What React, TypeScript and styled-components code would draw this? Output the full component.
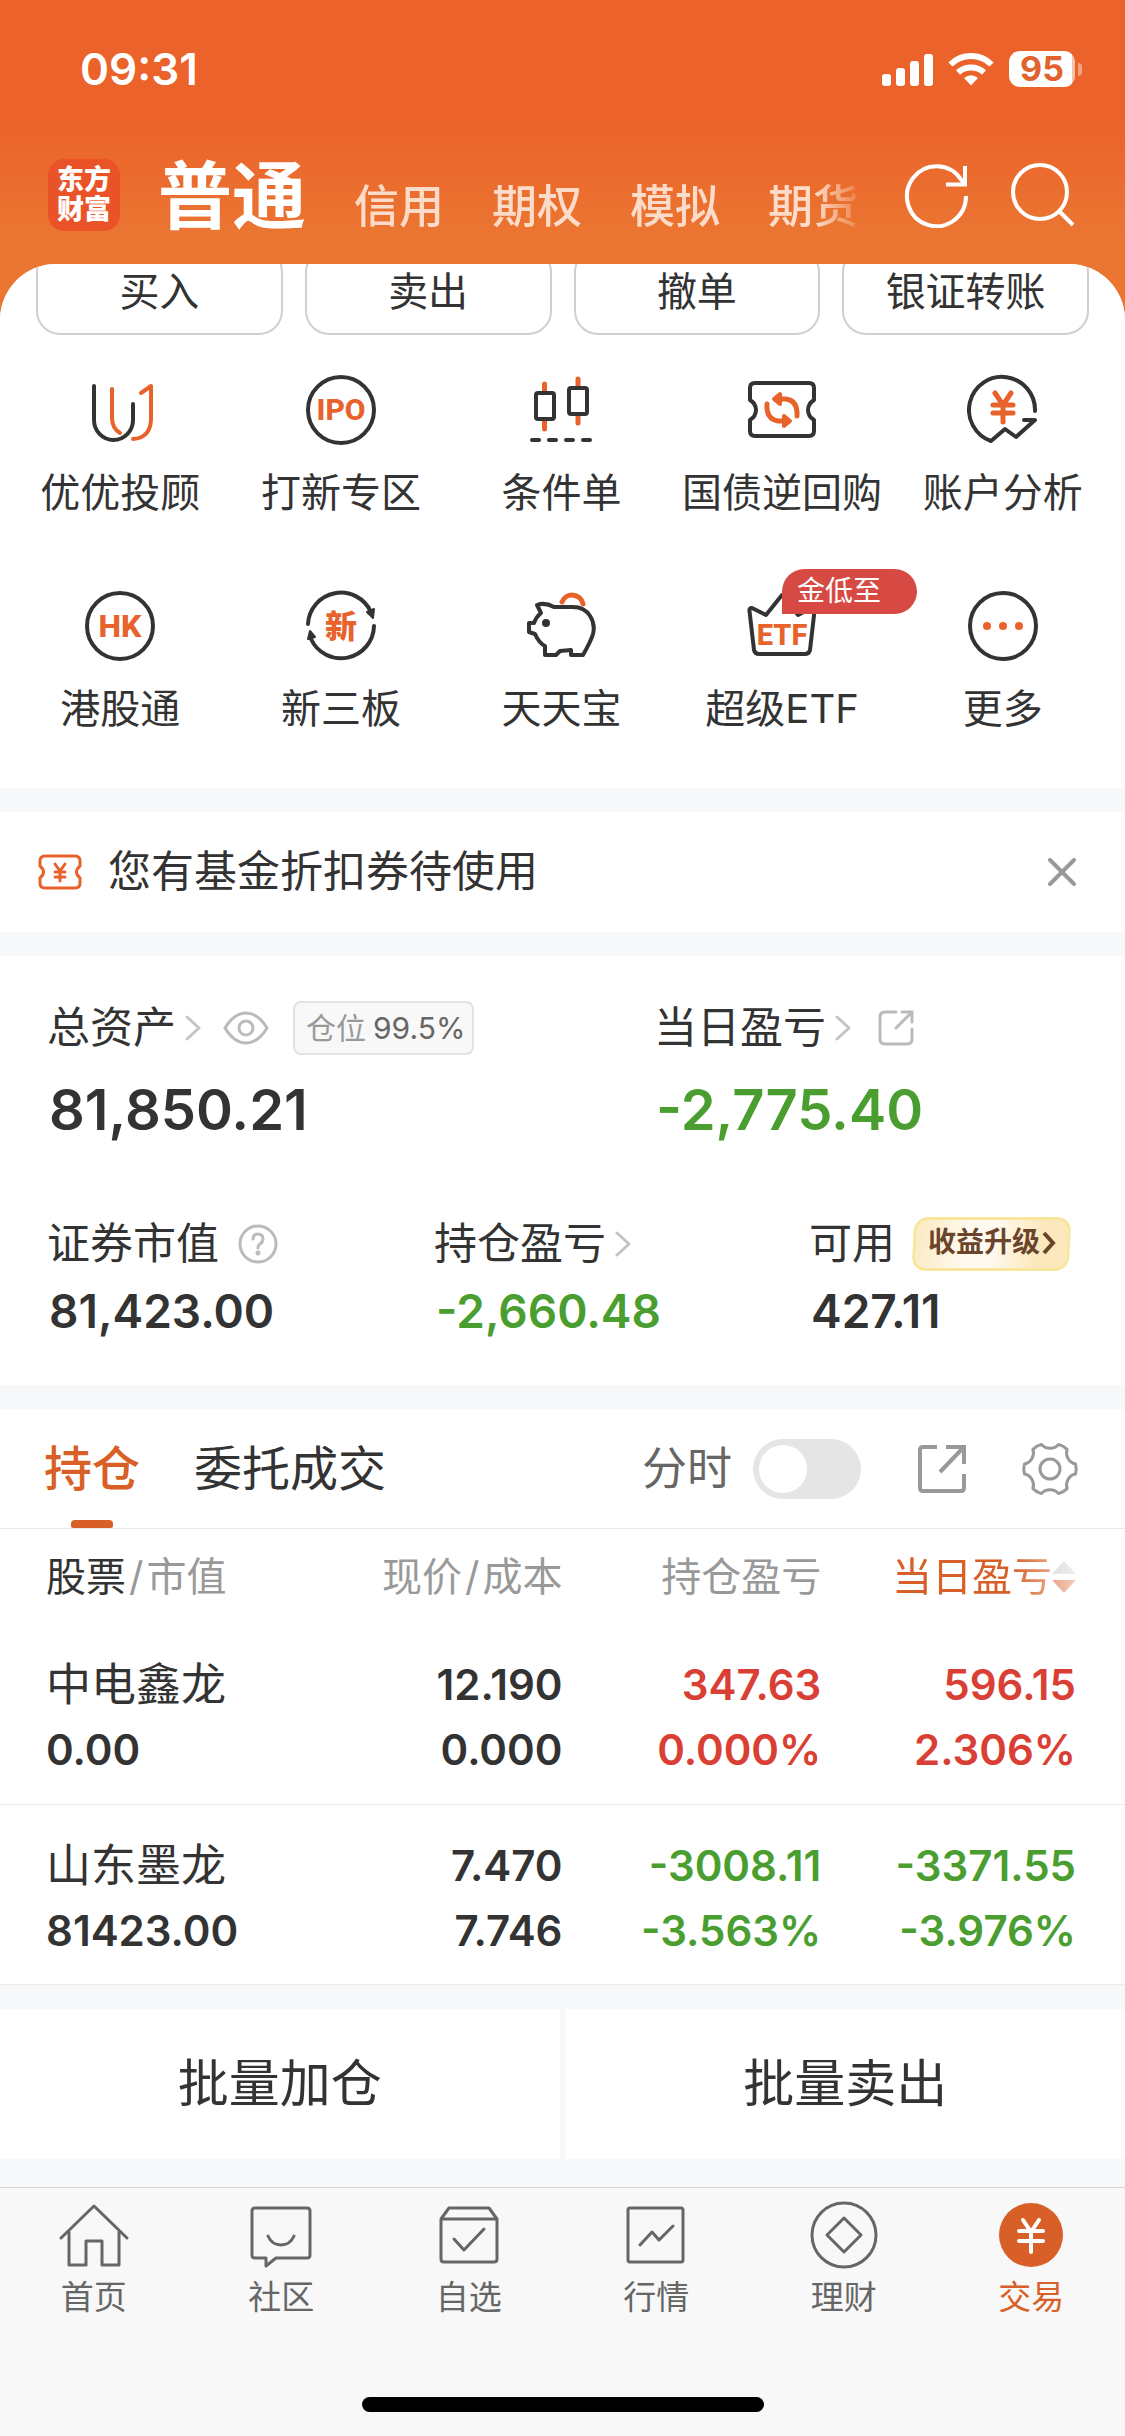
import React from "react";
import styled, { createGlobalStyle } from "styled-components";

const color = {
  ink: "#333333",
  mid: "#666666",
  soft: "#999999",
  faint: "#bbbbbb",
  accent: "#d95f28",
  icon: "#e8632c",
  up: "#d93f35",
  down: "#4a9e30",
  band: "#f7f8fa",
};

const Global = createGlobalStyle`
  *, *::before, *::after { box-sizing: border-box; }
  body {
    margin: 0;
    background: ${color.band};
    color: ${color.ink};
    font-family: Inter, "Noto Sans CJK SC", sans-serif;
    line-height: 1.2;
  }
  button {
    margin: 0;
    padding: 0;
    border: 0;
    background: none;
    color: inherit;
    font: inherit;
    cursor: pointer;
  }
  a { color: inherit; text-decoration: none; }
  svg { display: block; flex: none; }
  h1, h2, p, dl, dd, dt { margin: 0; font-weight: 400; }
`;

const Shell = styled.div`
  display: flex;
  flex-direction: column;
  min-height: 100vh;
  background: #eb7632;
`;

/* ---------- header ---------- */

const Header = styled.header`
  background: linear-gradient(#eb622a 0, #eb622a 116px, #eb7632 240px);
  color: #fff;
`;

const StatusBar = styled.div`
  display: flex;
  align-items: center;
  justify-content: space-between;
  height: 124px;
  padding: 14px 43px 0 80px;
`;

const Clock = styled.time`
  font-size: 44px;
  font-weight: 600;
  line-height: 56px;
`;

const StatusIcons = styled.div`
  display: flex;
  align-items: center;
  gap: 15px;
`;

const Battery = styled.div`
  display: flex;
  align-items: center;
  gap: 3px;
  &::after {
    content: "";
    width: 4px;
    height: 13px;
    border-radius: 0 6px 6px 0;
    background: #f2a680;
  }
`;

const BatteryLevel = styled.span`
  width: 66px;
  height: 36px;
  border-radius: 11px;
  background: linear-gradient(90deg, #fff 95%, #f6c3a8 95%);
  color: #e0622d;
  font-size: 34px;
  font-weight: 700;
  line-height: 36px;
  text-align: center;
`;

const NavRow = styled.div`
  display: flex;
  align-items: center;
  height: 140px;
  padding: 2px 50px 0 48px;
`;

const Logo = styled.div`
  flex: none;
  display: flex;
  align-items: center;
  justify-content: center;
  width: 72px;
  height: 72px;
  border-radius: 16px;
  background: #ea5328;
  font-size: 27px;
  font-weight: 900;
  line-height: 30px;
`;

const AccountTabs = styled.nav`
  flex: 1;
  display: flex;
  align-items: baseline;
  gap: 48px;
  overflow: hidden;
  margin: 0 37px 0 38px;
  padding-top: 12px;
  white-space: nowrap;
  mask-image: linear-gradient(90deg, #000 calc(100% - 52px), transparent);
`;

const AccountTab = styled.button<{ $on?: boolean }>`
  flex: none;
  color: ${(p) => (p.$on ? "#fff" : "#fcdcc9")};
  font-size: ${(p) => (p.$on ? 74 : 45)}px;
  font-weight: ${(p) => (p.$on ? 700 : 500)};
  line-height: 104px;
`;

const NavActions = styled.div`
  display: flex;
  gap: 39px;
`;

/* ---------- sheet ---------- */

const Sheet = styled.main`
  flex: 1;
  display: flex;
  flex-direction: column;
  gap: 24px;
  overflow: hidden;
  border-radius: 56px 56px 0 0;
  background: ${color.band};
`;

const Panel = styled.section`
  background: #fff;
`;

const TradeActions = styled.div`
  display: grid;
  grid-template-columns: repeat(4, 1fr);
  gap: 22px;
  margin-top: -16px;
  padding: 0 36px;
`;

const TradeButton = styled.button`
  height: 87px;
  border: 2px solid #d0d0d0;
  border-radius: 24px;
  font-size: 40px;
`;

const ShortcutGrid = styled.div`
  display: grid;
  grid-template-columns: repeat(5, 1fr);
  row-gap: 73px;
  padding: 39px 12px 55px 10px;
`;

const Shortcut = styled.a`
  position: relative;
  display: flex;
  flex-direction: column;
  align-items: center;
  gap: 23px;
  font-size: 40px;
  line-height: 48px;
  white-space: nowrap;
`;

const PromoTag = styled.span`
  position: absolute;
  top: -21px;
  left: 50%;
  width: 135px;
  height: 45px;
  padding-left: 15px;
  border-radius: 23px 23px 23px 0;
  background: #d74a43;
  color: #fff;
  font-size: 28px;
  line-height: 45px;
`;

const Notice = styled(Panel)`
  display: flex;
  align-items: center;
  height: 120px;
  padding: 0 49px 0 38px;
`;

const NoticeText = styled.p`
  flex: 1;
  margin-left: 26px;
  font-size: 43px;
`;

/* ---------- assets ---------- */

const Assets = styled(Panel)`
  display: flex;
  flex-direction: column;
  gap: 72px;
  padding: 45px 49px 46px;
`;

const FigureRow = styled.dl<{ $columns: string }>`
  display: grid;
  grid-template-columns: ${(p) => p.$columns};
`;

const FigureLabel = styled.dt`
  display: flex;
  align-items: center;
  height: 54px;
  margin-left: -2px;
  font-size: 43px;
  white-space: nowrap;
`;

const FigureLink = styled.button`
  display: flex;
  align-items: center;
  gap: 9px;
`;

const IconButton = styled.button<{ $gap?: number }>`
  flex: none;
  margin-left: ${(p) => p.$gap ?? 0}px;
`;

const FigureValue = styled.dd<{ $big?: boolean; $tone?: string }>`
  margin-top: ${(p) => (p.$big ? 20 : 12)}px;
  color: ${(p) => p.$tone ?? color.ink};
  font-size: ${(p) => (p.$big ? 56 : 46)}px;
  font-weight: 600;
  line-height: ${(p) => (p.$big ? 70 : 56)}px;
`;

const PositionTag = styled.span`
  display: flex;
  align-items: center;
  gap: 7px;
  height: 54px;
  margin-left: 23px;
  padding: 0 7px 0 11px;
  border: 2px solid #e2e2e2;
  border-radius: 8px;
  background: #f8f8f8;
  color: ${color.soft};
  font-size: 30px;
  b { color: ${color.mid}; font-weight: 400; }
`;

const UpgradeButton = styled.button`
  position: relative;
  z-index: 0;
  display: flex;
  align-items: center;
  gap: 2px;
  height: 54px;
  margin-left: 18px;
  padding: 0 14px 2px 15px;
  color: #6a452c;
  font-size: 28px;
  font-weight: 700;
  &::before {
    content: "";
    position: absolute;
    inset: 0;
    z-index: -1;
    border: 3px solid #f8e69c;
    border-radius: 14px;
    background: linear-gradient(100deg, #fbe9c0, #fffaf0 35%, #fffaf0 50%, #fce8bd 80%);
    transform: skewX(-3deg);
  }
`;

/* ---------- holdings ---------- */

const HoldingBar = styled.div`
  display: flex;
  align-items: center;
  height: 120px;
  padding: 0 45px 0 44px;
  border-bottom: 1px solid #e8e8e8;
`;

const HoldingTab = styled.button<{ $on?: boolean }>`
  position: relative;
  height: 119px;
  margin-right: 54px;
  color: ${(p) => (p.$on ? color.accent : color.ink)};
  font-size: 48px;
  font-weight: ${(p) => (p.$on ? 500 : 400)};
  &::after {
    content: "";
    display: ${(p) => (p.$on ? "block" : "none")};
    position: absolute;
    bottom: 0;
    left: calc(50% - 21px);
    width: 42px;
    height: 8px;
    border-radius: 4px 4px 2px 2px;
    background: ${color.accent};
  }
`;

const SwitchLabel = styled.label`
  display: flex;
  align-items: center;
  gap: 21px;
  margin-left: auto;
  color: ${color.mid};
  font-size: 45px;
`;

const Switch = styled.input`
  appearance: none;
  width: 108px;
  height: 60px;
  margin: 0;
  padding: 6px;
  border-radius: 30px;
  background: #e5e5e5;
  &::before {
    content: "";
    display: block;
    width: 48px;
    height: 48px;
    border-radius: 50%;
    background: #fff;
  }
  &:checked { background: ${color.accent}; }
  &:checked::before { margin-left: auto; }
`;

const Table = styled.table`
  width: 100%;
  table-layout: fixed;
  border-collapse: collapse;
  text-align: right;
  white-space: nowrap;
  th, td { padding: 0; font-weight: 400; }
  th:first-child, td:first-child { padding-left: 46px; text-align: left; }
  th:last-child, td:last-child { padding-right: 49px; }
`;

const HeadRow = styled.tr`
  height: 95px;
  color: ${color.soft};
  font-size: 40px;
  b { color: ${color.ink}; font-weight: 400; }
`;

const Slash = styled.span`
  margin: 0 3px;
  &::before { content: "/"; }
`;

const SortButton = styled.button`
  display: flex;
  align-items: center;
  justify-content: flex-end;
  width: 100%;
  color: ${color.accent};
  mask-image: linear-gradient(90deg, #000 calc(100% - 64px), rgba(0, 0, 0, 0.3));
`;

const StockRow = styled.tr`
  height: 180px;
  border-bottom: 1px solid #ebebeb;
  vertical-align: top;
`;

const Line = styled.div<{ $name?: boolean; $tone?: string }>`
  color: ${(p) => p.$tone ?? color.ink};
  font-size: ${(p) => (p.$name ? 45 : 42)}px;
  font-weight: ${(p) => (p.$name ? 400 : 600)};
  line-height: 65px;
  &:first-child { margin-top: 28px; }
`;

const BatchActions = styled.div`
  display: grid;
  grid-template-columns: 1fr 1fr;
  gap: 6px;
`;

const BatchButton = styled.button`
  height: 150px;
  background: #fff;
  font-size: 51px;
`;

/* ---------- bottom bar ---------- */

const BottomBar = styled.footer`
  border-top: 1px solid #d2d3d6;
  background: #f8f8f8;
`;

const BottomNav = styled.nav`
  display: grid;
  grid-template-columns: repeat(6, 1fr);
  padding-top: 12px;
`;

const BottomLink = styled.a<{ $on?: boolean }>`
  display: flex;
  flex-direction: column;
  align-items: center;
  gap: 3px;
  color: ${(p) => (p.$on ? color.accent : color.mid)};
  font-size: 33px;
  line-height: 44px;
`;

const HomeIndicator = styled.div`
  width: 402px;
  height: 15px;
  margin: 78px auto 24px;
  border-radius: 8px;
  background: #000;
`;

/* ---------- icons ---------- */

const Art = ({ children }: { children: React.ReactNode }) => (
  <svg width="72" height="72" viewBox="0 0 72 72" fill="none" stroke={color.ink} strokeWidth="4" strokeLinecap="round" strokeLinejoin="round" aria-hidden="true">
    {children}
  </svg>
);

const ArtText = ({ y, size, children }: { y: number; size: number; children: string }) => (
  <text x="36" y={y} textAnchor="middle" fontSize={size} fontWeight="800" fontFamily='"Liberation Sans Narrow", Roboto, "Noto Sans CJK SC", sans-serif' fill={color.icon} stroke="none">
    {children}
  </text>
);

const BarArt = ({ children }: { children: React.ReactNode }) => (
  <svg width="72" height="72" viewBox="0 0 72 72" fill="none" stroke="currentColor" strokeWidth="3" strokeLinecap="round" strokeLinejoin="round" aria-hidden="true">
    {children}
  </svg>
);

const Chevron = () => (
  <svg width="17" height="28" viewBox="0 0 17 28" fill="none" stroke="#c4c4c4" strokeWidth="3" strokeLinecap="round" strokeLinejoin="round" aria-hidden="true">
    <path d="M2 3l12 11L2 25" />
  </svg>
);

const gearOutline = () => {
  const at = (deg: number, r: number) => {
    const a = (deg * Math.PI) / 180;
    return `${(30 + r * Math.cos(a)).toFixed(1)} ${(30 + r * Math.sin(a)).toFixed(1)}`;
  };
  let d = `M${at(-11, 26)}`;
  for (let k = 0; k < 6; k++) {
    const base = k * 60;
    d += `Q${at(base, 27)} ${at(base + 11, 26)}`;
    d += `C${at(base + 18, 20)} ${at(base + 42, 20)} ${at(base + 49, 26)}`;
  }
  return d + "Z";
};

const shortcuts = [
  {
    label: "优优投顾",
    art: (
      <Art>
        <path d="M10 12V46a19.500 20 0 0 0 39 0V30" />
        <g stroke={color.icon}>
          <path d="M28 15V44q0 10 8 15" />
          <path d="M57 19l10-7V46q-1 18-18 19" />
        </g>
      </Art>
    ),
  },
  {
    label: "打新专区",
    art: (
      <Art>
        <circle cx="36" cy="36" r="33" />
        <ArtText y={46} size={30}>IPO</ArtText>
      </Art>
    ),
  },
  {
    label: "条件单",
    art: (
      <Art>
        <g stroke={color.icon} strokeWidth="5">
          <path d="M19.500 10v8M19.500 47v8M53 5v8M53 41v8" />
        </g>
        <rect x="11" y="19" width="18" height="26" rx="2" />
        <rect x="44" y="14" width="18" height="26" rx="2" />
        <path d="M7 66h7M24 66h7M41 66h7M58 66h7" />
      </Art>
    ),
  },
  {
    label: "国债逆回购",
    art: (
      <Art>
        <path d="M9 9H63q5 0 5 5V26C60 31 60 41 68 46V57q0 5-5 5H9q-5 0-5-5V46C12 41 12 31 4 26V14q0-5 5-5Z" />
        <g stroke={color.icon}>
          <path d="M33 25h7q12 2 11 17M39 47h-7q-12-2-11-17" strokeWidth="5" />
          <path d="M28 25l6-5v10ZM44 47l-6-5v10Z" fill={color.icon} />
        </g>
      </Art>
    ),
  },
  {
    label: "账户分析",
    art: (
      <Art>
        <path d="M68 37A33 33 0 1 0 24 67L38 55l11 8 19-17H57" />
        <path d="M28 19l8 12 8-12M36 31v17M26 31h20M26 39h20" stroke={color.icon} strokeWidth="5" />
      </Art>
    ),
  },
  {
    label: "港股通",
    art: (
      <Art>
        <circle cx="36" cy="36" r="33" />
        <ArtText y={47} size={32}>HK</ArtText>
      </Art>
    ),
  },
  {
    label: "新三板",
    art: (
      <Art>
        <path d="M3 34A33 33 0 0 1 66 22M69 36A33 33 0 0 1 6 49" />
        <path d="M62 22l7-3-1 9ZM3 49l7-2-5-6Z" fill={color.ink} strokeWidth="2" />
        <ArtText y={48} size={32}>新</ArtText>
      </Art>
    ),
  },
  {
    label: "天天宝",
    art: (
      <Art>
        <path d="M37 12A11 11 0 0 1 58 14" stroke={color.icon} strokeWidth="5" />
        <path d="M12 15q8-3 17 2H48C64 17 71 32 68 44q-2 7-10 21H46V60l-11 1-4 4H20V56q-6-3-10-12L4 42V33h5q2-6 7-10Z" />
        <circle cx="21" cy="33" r="4" fill={color.ink} stroke="none" />
      </Art>
    ),
  },
  {
    label: "超级ETF",
    tag: "金低至",
    art: (
      <Art>
        <path d="M20 25L6 18q-3 0-2.500 3L8 60q1 4 5 4H59q4 0 5-4l4.500-39q0-3-3-3L52 25 36 5Z" />
        <ArtText y={55} size={29}>ETF</ArtText>
      </Art>
    ),
  },
  {
    label: "更多",
    art: (
      <Art>
        <circle cx="36" cy="36" r="33" />
        <g fill={color.icon} stroke="none">
          <circle cx="20" cy="36" r="4" />
          <circle cx="36" cy="36" r="4" />
          <circle cx="52" cy="36" r="4" />
        </g>
      </Art>
    ),
  },
];

const stocks = [
  { name: "中电鑫龙", value: "0.00", price: "12.190", cost: "0.000", total: "347.63", totalPct: "0.000%", day: "596.15", dayPct: "2.306%", tone: color.up },
  { name: "山东墨龙", value: "81423.00", price: "7.470", cost: "7.746", total: "-3008.11", totalPct: "-3.563%", day: "-3371.55", dayPct: "-3.976%", tone: color.down },
];

const bottomLinks = [
  { label: "首页", art: <path d="M3 38L36 6l33 32M11 32V65H28V41H44V65H61V32" /> },
  {
    label: "社区",
    art: <path d="M10 8H62q3 0 3 3V55q0 3-3 3H31l-10 8V58H10q-3 0-3-3V11q0-3 3-3ZM23 36q4 9 13 9t13-9" />,
  },
  {
    label: "自选",
    art: <path d="M8 19V59q0 3 3 3H61q3 0 3-3V19ZM8 19l8-11H56l8 11M21 39l10 11 20-21" />,
  },
  {
    label: "行情",
    art: <path d="M10 8H61q2 0 2 2V60q0 2-2 2H10q-2 0-2-2V10q0-2 2-2ZM20 45l12-13 7 8 14-14" />,
  },
  {
    label: "理财",
    art: (
      <>
        <circle cx="36" cy="35" r="32" />
        <path d="M36 18l17 17-17 17-17-17Z" />
      </>
    ),
  },
  {
    label: "交易",
    on: true,
    art: (
      <>
        <circle cx="36" cy="35" r="32" fill="currentColor" stroke="none" />
        <path d="M28 20l8 12 8-12M36 32v20M24 31h24M24 41h24" stroke="#fff" strokeWidth="4" />
      </>
    ),
  },
];

export default function App() {
  return (
    <Shell>
      <Global />
      <Header>
        <StatusBar>
          <Clock>09:31</Clock>
          <StatusIcons>
            <svg width="51" height="33" viewBox="0 0 51 33" fill="#fff" aria-hidden="true">
              <rect x="0" y="21" width="9" height="12" rx="3" />
              <rect x="14" y="15" width="9" height="18" rx="3" />
              <rect x="28" y="8" width="9" height="25" rx="3" />
              <rect x="42" y="1" width="9" height="32" rx="3" />
            </svg>
            <svg width="46" height="34" viewBox="0 0 46 34" fill="none" stroke="#fff" strokeWidth="6" aria-hidden="true">
              <path d="M2.500 12.500Q11 4 23 4t20.500 8.500M10 20.500q5.500-5 13-5t13 5" />
              <path d="M16 26q7-5.500 14 0l-7 7.500Z" fill="#fff" stroke="none" />
            </svg>
            <Battery>
              <BatteryLevel>95</BatteryLevel>
            </Battery>
          </StatusIcons>
        </StatusBar>
        <NavRow>
          <Logo>
            <span>
              东方
              <br />
              财富
            </span>
          </Logo>
          <AccountTabs>
            <AccountTab $on>普通</AccountTab>
            <AccountTab>信用</AccountTab>
            <AccountTab>期权</AccountTab>
            <AccountTab>模拟</AccountTab>
            <AccountTab>期货</AccountTab>
          </AccountTabs>
          <NavActions>
            <IconButton aria-label="刷新">
              <svg width="66" height="66" viewBox="0 0 66 66" fill="none" stroke="#fff" strokeWidth="4">
                <path d="M62 34A29.500 30 0 1 1 57 17.500L61 22" />
                <path d="M61 4V22.500H42" />
              </svg>
            </IconButton>
            <IconButton aria-label="搜索">
              <svg width="66" height="66" viewBox="0 0 66 66" fill="none" stroke="#fff" strokeWidth="4">
                <circle cx="31" cy="30" r="27" />
                <path d="M50 49l14 14" />
              </svg>
            </IconButton>
          </NavActions>
        </NavRow>
      </Header>

      <Sheet>
        <Panel>
          <TradeActions>
            <TradeButton>买入</TradeButton>
            <TradeButton>卖出</TradeButton>
            <TradeButton>撤单</TradeButton>
            <TradeButton>银证转账</TradeButton>
          </TradeActions>
          <ShortcutGrid>
            {shortcuts.map((s) => (
              <Shortcut key={s.label} href="#">
                {s.art}
                {s.label}
                {s.tag && <PromoTag>{s.tag}</PromoTag>}
              </Shortcut>
            ))}
          </ShortcutGrid>
        </Panel>

        <Notice>
          <svg width="44" height="36" viewBox="0 0 44 36" fill="none" stroke={color.icon} strokeWidth="3" strokeLinecap="round" strokeLinejoin="round" aria-hidden="true">
            <path d="M7 2H37q5 0 5 5v5q-7 6 0 12v5q0 5-5 5H7q-5 0-5-5V24q7-6 0-12V7q0-5 5-5Z" />
            <path d="M17 10l5 7 5-7M22 17v10M17 18h10M17 23h10" />
          </svg>
          <NoticeText>您有基金折扣券待使用</NoticeText>
          <IconButton aria-label="关闭">
            <svg width="28" height="28" viewBox="0 0 28 28" fill="none" stroke={color.soft} strokeWidth="4" strokeLinecap="round">
              <path d="M2 2l24 24M26 2L2 26" />
            </svg>
          </IconButton>
        </Notice>

        <Assets>
          <FigureRow $columns="607fr 420fr">
            <div>
              <FigureLabel>
                <FigureLink>
                  总资产
                  <Chevron />
                </FigureLink>
                <IconButton $gap={20} aria-label="隐藏金额">
                  <svg width="48" height="34" viewBox="0 0 48 34" fill="none" stroke={color.faint} strokeWidth="3">
                    <path d="M3 17Q12 2 24 2t21 15Q36 32 24 32T3 17Z" />
                    <circle cx="24" cy="17" r="7" />
                  </svg>
                </IconButton>
                <PositionTag>
                  仓位 <b>99.5%</b>
                </PositionTag>
              </FigureLabel>
              <FigureValue $big>81,850.21</FigureValue>
            </div>
            <div>
              <FigureLabel>
                <FigureLink>
                  当日盈亏
                  <Chevron />
                </FigureLink>
                <IconButton $gap={25} aria-label="分享当日盈亏">
                  <svg width="38" height="38" viewBox="0 0 38 38" fill="none" stroke={color.faint} strokeWidth="3" strokeLinecap="round">
                    <path d="M19 3H8Q3 3 3 8V30q0 5 5 5H30q5 0 5-5V20M25 3H35V13M34 4L19 19" />
                  </svg>
                </IconButton>
              </FigureLabel>
              <FigureValue $big $tone={color.down}>-2,775.40</FigureValue>
            </div>
          </FigureRow>
          <FigureRow $columns="387fr 375fr 265fr">
            <div>
              <FigureLabel>
                证券市值
                <IconButton $gap={19} aria-label="证券市值说明">
                  <svg width="40" height="40" viewBox="0 0 40 40" fill="none" stroke={color.faint} strokeWidth="3" strokeLinecap="round">
                    <circle cx="20" cy="20" r="18" />
                    <path d="M15 15q0-5 5-5t5 5q0 3-3 5-2 1-2 4" />
                    <circle cx="20" cy="29" r="1" />
                  </svg>
                </IconButton>
              </FigureLabel>
              <FigureValue>81,423.00</FigureValue>
            </div>
            <div>
              <FigureLabel>
                <FigureLink>
                  持仓盈亏
                  <Chevron />
                </FigureLink>
              </FigureLabel>
              <FigureValue $tone={color.down}>-2,660.48</FigureValue>
            </div>
            <div>
              <FigureLabel>
                可用
                <UpgradeButton>
                  收益升级
                  <svg width="14" height="24" viewBox="0 0 14 24" fill="none" stroke="currentColor" strokeWidth="4" aria-hidden="true">
                    <path d="M2 2l9 10-9 10" />
                  </svg>
                </UpgradeButton>
              </FigureLabel>
              <FigureValue>427.11</FigureValue>
            </div>
          </FigureRow>
        </Assets>

        <Panel>
          <HoldingBar>
            <HoldingTab $on>持仓</HoldingTab>
            <HoldingTab>委托成交</HoldingTab>
            <SwitchLabel>
              分时
              <Switch type="checkbox" />
            </SwitchLabel>
            <IconButton $gap={56} aria-label="导出">
              <svg width="50" height="50" viewBox="0 0 50 50" fill="none" stroke={color.soft} strokeWidth="4" strokeLinecap="butt">
                <path d="M20 3H6Q3 3 3 6V44q0 3 3 3H44q3 0 3-3V30M29 3H47V20M46 4L23 28" />
              </svg>
            </IconButton>
            <IconButton $gap={53} aria-label="设置">
              <svg width="60" height="60" viewBox="0 0 60 60" fill="none" stroke={color.soft} strokeWidth="3" strokeLinejoin="round">
                <path d={gearOutline()} />
                <circle cx="30" cy="30" r="10" />
              </svg>
            </IconButton>
          </HoldingBar>
          <Table>
            <colgroup>
              <col style={{ width: "25%" }} />
              <col style={{ width: "25%" }} />
              <col style={{ width: "23%" }} />
              <col style={{ width: "27%" }} />
            </colgroup>
            <thead>
              <HeadRow>
                <th scope="col">
                  <b>股票</b>
                  <Slash />
                  市值
                </th>
                <th scope="col">
                  现价
                  <Slash />
                  成本
                </th>
                <th scope="col">持仓盈亏</th>
                <th scope="col">
                  <SortButton>
                    当日盈亏
                    <svg width="24" height="36" viewBox="0 0 24 36" aria-hidden="true">
                      <path d="M12 2l12 13H0Z" fill="#c8c8c8" />
                      <path d="M12 34L0 21h24Z" fill={color.accent} />
                    </svg>
                  </SortButton>
                </th>
              </HeadRow>
            </thead>
            <tbody>
              {stocks.map((s) => (
                <StockRow key={s.name}>
                  <td>
                    <Line $name>{s.name}</Line>
                    <Line>{s.value}</Line>
                  </td>
                  <td>
                    <Line>{s.price}</Line>
                    <Line>{s.cost}</Line>
                  </td>
                  <td>
                    <Line $tone={s.tone}>{s.total}</Line>
                    <Line $tone={s.tone}>{s.totalPct}</Line>
                  </td>
                  <td>
                    <Line $tone={s.tone}>{s.day}</Line>
                    <Line $tone={s.tone}>{s.dayPct}</Line>
                  </td>
                </StockRow>
              ))}
            </tbody>
          </Table>
        </Panel>

        <BatchActions>
          <BatchButton>批量加仓</BatchButton>
          <BatchButton>批量卖出</BatchButton>
        </BatchActions>
      </Sheet>

      <BottomBar>
        <BottomNav>
          {bottomLinks.map((l) => (
            <BottomLink key={l.label} href="#" $on={l.on}>
              <BarArt>{l.art}</BarArt>
              {l.label}
            </BottomLink>
          ))}
        </BottomNav>
        <HomeIndicator />
      </BottomBar>
    </Shell>
  );
}
